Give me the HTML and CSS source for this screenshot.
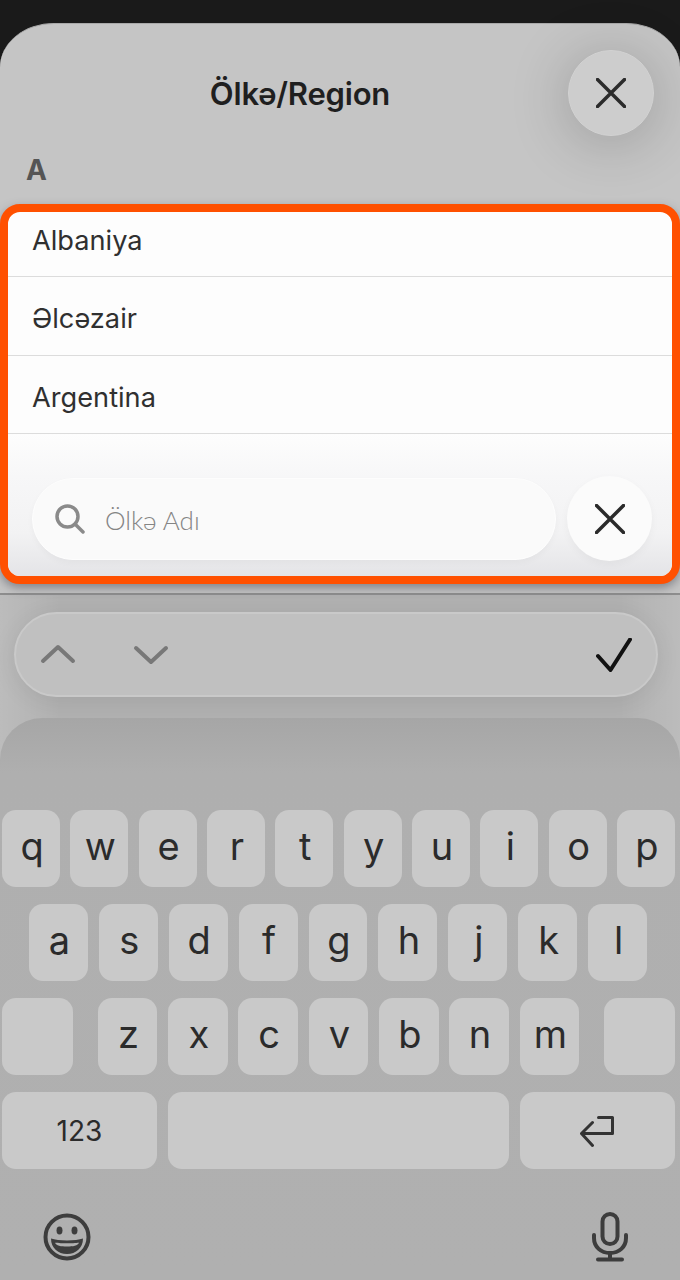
FILE: index.html
```html
<!DOCTYPE html>
<html lang="az">
<head>
<meta charset="utf-8">
<title>Ölkə/Region</title>
<link rel="stylesheet" href="styles.css">
</head>
<body>
<div class="screen">
  <section class="sheet">
    <header class="sheet-head">
      <h1 class="title">Ölkə/Region</h1>
      <button class="close close-top" aria-label="Bağla">
        <svg class="x-icon" viewBox="0 0 30 30"><path d="M1.5 1.5L28.5 28.5M28.5 1.5L1.5 28.5"/></svg>
      </button>
    </header>
    <div class="letter">A</div>
    <div class="panel">
      <div class="list">
        <div class="list-inner">
          <div class="row">Albaniya</div>
          <div class="row">Əlcəzair</div>
          <div class="row">Argentina</div>
        </div>
      </div>
      <div class="search-bar">
        <div class="search">
          <svg class="search-icon" viewBox="0 0 30 30"><circle cx="12.5" cy="12.5" r="10.5"/><path d="M20 20L28 28"/></svg>
          <span class="placeholder">Ölkə Adı</span>
        </div>
        <button class="close close-search" aria-label="Təmizlə">
          <svg class="x-icon" viewBox="0 0 30 30"><path d="M1.5 1.5L28.5 28.5M28.5 1.5L1.5 28.5"/></svg>
        </button>
      </div>
    </div>
  </section>

  <div class="lower">
    <div class="toolbar">
      <svg class="chev chev-up" viewBox="0 0 36 22"><path d="M3 17L18 3L33 17"/></svg>
      <svg class="chev chev-down" viewBox="0 0 36 22"><path d="M3 4L18 18L33 4"/></svg>
      <svg class="check" viewBox="0 0 36 34"><path d="M2 18L14.5 32L34 1.5"/></svg>
    </div>

    <section class="keyboard">
      <div class="kb-row kb-row-1">
        <div class="key">q</div><div class="key">w</div><div class="key">e</div><div class="key">r</div><div class="key">t</div><div class="key">y</div><div class="key">u</div><div class="key">i</div><div class="key">o</div><div class="key">p</div>
      </div>
      <div class="kb-row kb-row-2">
        <div class="key">a</div><div class="key">s</div><div class="key">d</div><div class="key">f</div><div class="key">g</div><div class="key">h</div><div class="key">j</div><div class="key">k</div><div class="key">l</div>
      </div>
      <div class="kb-row kb-row-3">
        <div class="key key-side"></div>
        <div class="kb-letters">
          <div class="key">z</div><div class="key">x</div><div class="key">c</div><div class="key">v</div><div class="key">b</div><div class="key">n</div><div class="key">m</div>
        </div>
        <div class="key key-side"></div>
      </div>
      <div class="kb-row kb-row-4">
        <div class="key key-wide key-num">123</div>
        <div class="key key-space"></div>
        <div class="key key-wide key-return">
          <svg class="return" viewBox="0 0 36 36"><path d="M18.5 4.5H32.5V20.5H1.5M12.5 9.5L1.5 20.5L12.5 32.5"/></svg>
        </div>
      </div>
      <div class="kb-bottom">
        <svg class="emoji" viewBox="0 0 48 48">
          <circle class="emoji-face" cx="24" cy="24" r="21.5"/>
          <ellipse class="emoji-fill" cx="16.5" cy="17.5" rx="3" ry="4"/>
          <ellipse class="emoji-fill" cx="31.5" cy="17.5" rx="3" ry="4"/>
          <path class="emoji-fill" d="M8 25.5C15 28 33 28 40 25.5C40 35 33 41 24 41C15 41 8 35 8 25.5ZM12 29.5C13.5 30.5 34.5 30.5 36 29.5C35 33 30 33.5 24 33.5C18 33.5 13 33 12 29.5Z" fill-rule="evenodd"/>
        </svg>
        <svg class="mic" viewBox="0 0 36 50">
          <rect class="mic-line" x="10.5" y="2" width="15" height="30" rx="7.5"/>
          <path class="mic-line" d="M2 23V26C2 35 9 41 18 41C27 41 34 35 34 26V23M18 41V47M6 47.5H30"/>
        </svg>
      </div>
    </section>
  </div>
</div>
</body>
</html>
```

FILE: styles.css
```css
* { box-sizing: border-box; }

html, body {
  margin: 0;
  padding: 0;
}

body {
  width: 680px;
  height: 1280px;
  overflow: hidden;
  background: #1a1a1a;
  font-family: Inter, "Liberation Sans", sans-serif;
}

.screen {
  width: 680px;
  height: 1280px;
  padding-top: 23px;
  overflow: hidden;
  display: flex;
  flex-direction: column;
}

.sheet {
  height: 572px;
  flex: none;
  background: #c5c5c5;
  border-radius: 54px 54px 0 0 / 44px 44px 0 0;
  border-top: 1px solid #a9a9a9;
  border-bottom: 2px solid #8e8e8e;
  position: relative;
  z-index: 2;
}

.sheet-head {
  display: flex;
  align-items: center;
  padding: 26px 26px 0 32px;
}

.title {
  flex: 1;
  margin: 0;
  padding-top: 2px;
  text-align: center;
  font-size: 31px;
  line-height: 84px;
  font-weight: 600;
  letter-spacing: -0.2px;
  color: #1f1f1f;
}

.close {
  flex: none;
  padding: 0;
  border-radius: 50%;
  display: flex;
  align-items: center;
  justify-content: center;
}

.close-top {
  width: 86px;
  height: 86px;
  background: #cdcdcd;
  border: 1px solid #d2d2d2;
  box-shadow: 0 6px 60px rgba(0, 0, 0, 0.22);
}

.x-icon {
  width: 30px;
  height: 30px;
  fill: none;
  stroke: #2b2b2b;
  stroke-width: 3.5px;
  stroke-linecap: round;
}

.letter {
  height: 68px;
  padding: 23px 0 0 26px;
  font-size: 28px;
  line-height: 22px;
  font-weight: 700;
  color: #555;
}

.panel {
  height: 380px;
  border: 8px solid #ff5000;
  border-radius: 20px;
  background: #fdfdfd;
  overflow: hidden;
  box-shadow: 0 4px 10px rgba(70, 70, 80, 0.5);
}

.list {
  height: 222px;
  overflow: hidden;
}

.list-inner {
  margin-top: -13.5px;
}

.row {
  height: 78.5px;
  padding: 5.5px 0 0 24px;
  display: flex;
  align-items: center;
  border-bottom: 1px solid #dcdcdc;
  font-size: 27.2px;
  color: #303030;
}

.search-bar {
  height: 142px;
  padding: 42px 20px 15px 24px;
  display: flex;
  align-items: center;
  gap: 11px;
  background: linear-gradient(#fdfdfd, #f7f7f8 30%, #f2f2f3 70%, #e4e4e7);
}

.search {
  flex: 1;
  height: 82px;
  display: flex;
  align-items: center;
  padding-left: 22px;
  gap: 20px;
  border: 1px solid #fdfdfd;
  border-radius: 41px;
  background: #fafafa;
  box-shadow: 0 3px 6px rgba(0, 0, 0, 0.03);
}

.search-icon {
  width: 30px;
  height: 30px;
  fill: none;
  stroke: #8a8a8a;
  stroke-width: 3.5px;
  stroke-linecap: round;
}

.placeholder {
  padding-top: 2px;
  font-family: Lato, sans-serif;
  font-size: 26px;
  font-weight: 300;
  color: #858585;
}

.close-search {
  width: 85px;
  height: 85px;
  background: #fbfbfb;
  border: 0;
  box-shadow: 0 3px 8px rgba(0, 0, 0, 0.04);
}

.lower {
  flex: 1;
  min-height: 0;
  display: flex;
  flex-direction: column;
  background:
    linear-gradient(90deg, rgba(255, 255, 255, 0.14), rgba(255, 255, 255, 0) 9%, rgba(255, 255, 255, 0) 91%, rgba(255, 255, 255, 0.14)),
    #b1b1b1;
}

.toolbar {
  flex: none;
  margin: 17px 22px 0 14px;
  height: 85px;
  padding: 0 24px 0 24px;
  display: flex;
  align-items: center;
  border-radius: 43px;
  background: #c0c0c0;
  border: 2px solid #c9c9c9;
  box-shadow: 0 4px 24px rgba(0, 0, 0, 0.08);
}

.chev {
  width: 36px;
  height: 22px;
  fill: none;
  stroke: #787878;
  stroke-width: 4px;
  stroke-linecap: round;
  stroke-linejoin: round;
}

.chev-down {
  margin-left: 57px;
}

.check {
  margin-left: auto;
  width: 36px;
  height: 34px;
  fill: none;
  stroke: #111;
  stroke-width: 4px;
  stroke-linecap: round;
  stroke-linejoin: round;
}

.keyboard {
  flex: 1;
  margin-top: 21px;
  padding-top: 92px;
  border-radius: 42px 42px 0 0;
  background: linear-gradient(#a6a6a6, #afafaf 55px, #b0b0b0);
  display: flex;
  flex-direction: column;
  gap: 17px;
}

.kb-row {
  height: 77px;
  flex: none;
  display: flex;
  padding: 0 5px 0 2px;
}

.kb-row-1 { gap: 10.3px; }

.kb-row-2 {
  gap: 11px;
  padding: 0 33px 0 29px;
}

.kb-row-3 { justify-content: space-between; }

.kb-row-4 { gap: 11px; }

.kb-letters {
  display: flex;
  gap: 10.8px;
}

.key {
  flex: 1;
  border-radius: 14px;
  background: #c9c9c9;
  display: flex;
  align-items: center;
  justify-content: center;
  padding: 0 0 5px 2px;
  font-size: 38px;
  line-height: 1;
  color: #2b2b2b;
}

.kb-letters .key {
  flex: none;
  width: 59.5px;
}

.key-side {
  flex: none;
  width: 71px;
}

.key-wide {
  flex: none;
  width: 155px;
}

.key-num {
  padding: 0;
  font-size: 28px;
}

.key-return {
  padding: 0;
}

.return {
  width: 36px;
  height: 36px;
  fill: none;
  stroke: #333;
  stroke-width: 3px;
  stroke-linecap: round;
  stroke-linejoin: round;
}

.kb-bottom {
  display: flex;
  justify-content: space-between;
  align-items: center;
  padding: 26px 52px 0 43px;
}

.emoji {
  width: 48px;
  height: 48px;
}

.emoji-face {
  fill: none;
  stroke: #3d3d3d;
  stroke-width: 4px;
}

.emoji-fill {
  fill: #3d3d3d;
}

.mic {
  width: 36px;
  height: 50px;
}

.mic-line {
  fill: none;
  stroke: #3d3d3d;
  stroke-width: 4px;
  stroke-linecap: round;
}
```
